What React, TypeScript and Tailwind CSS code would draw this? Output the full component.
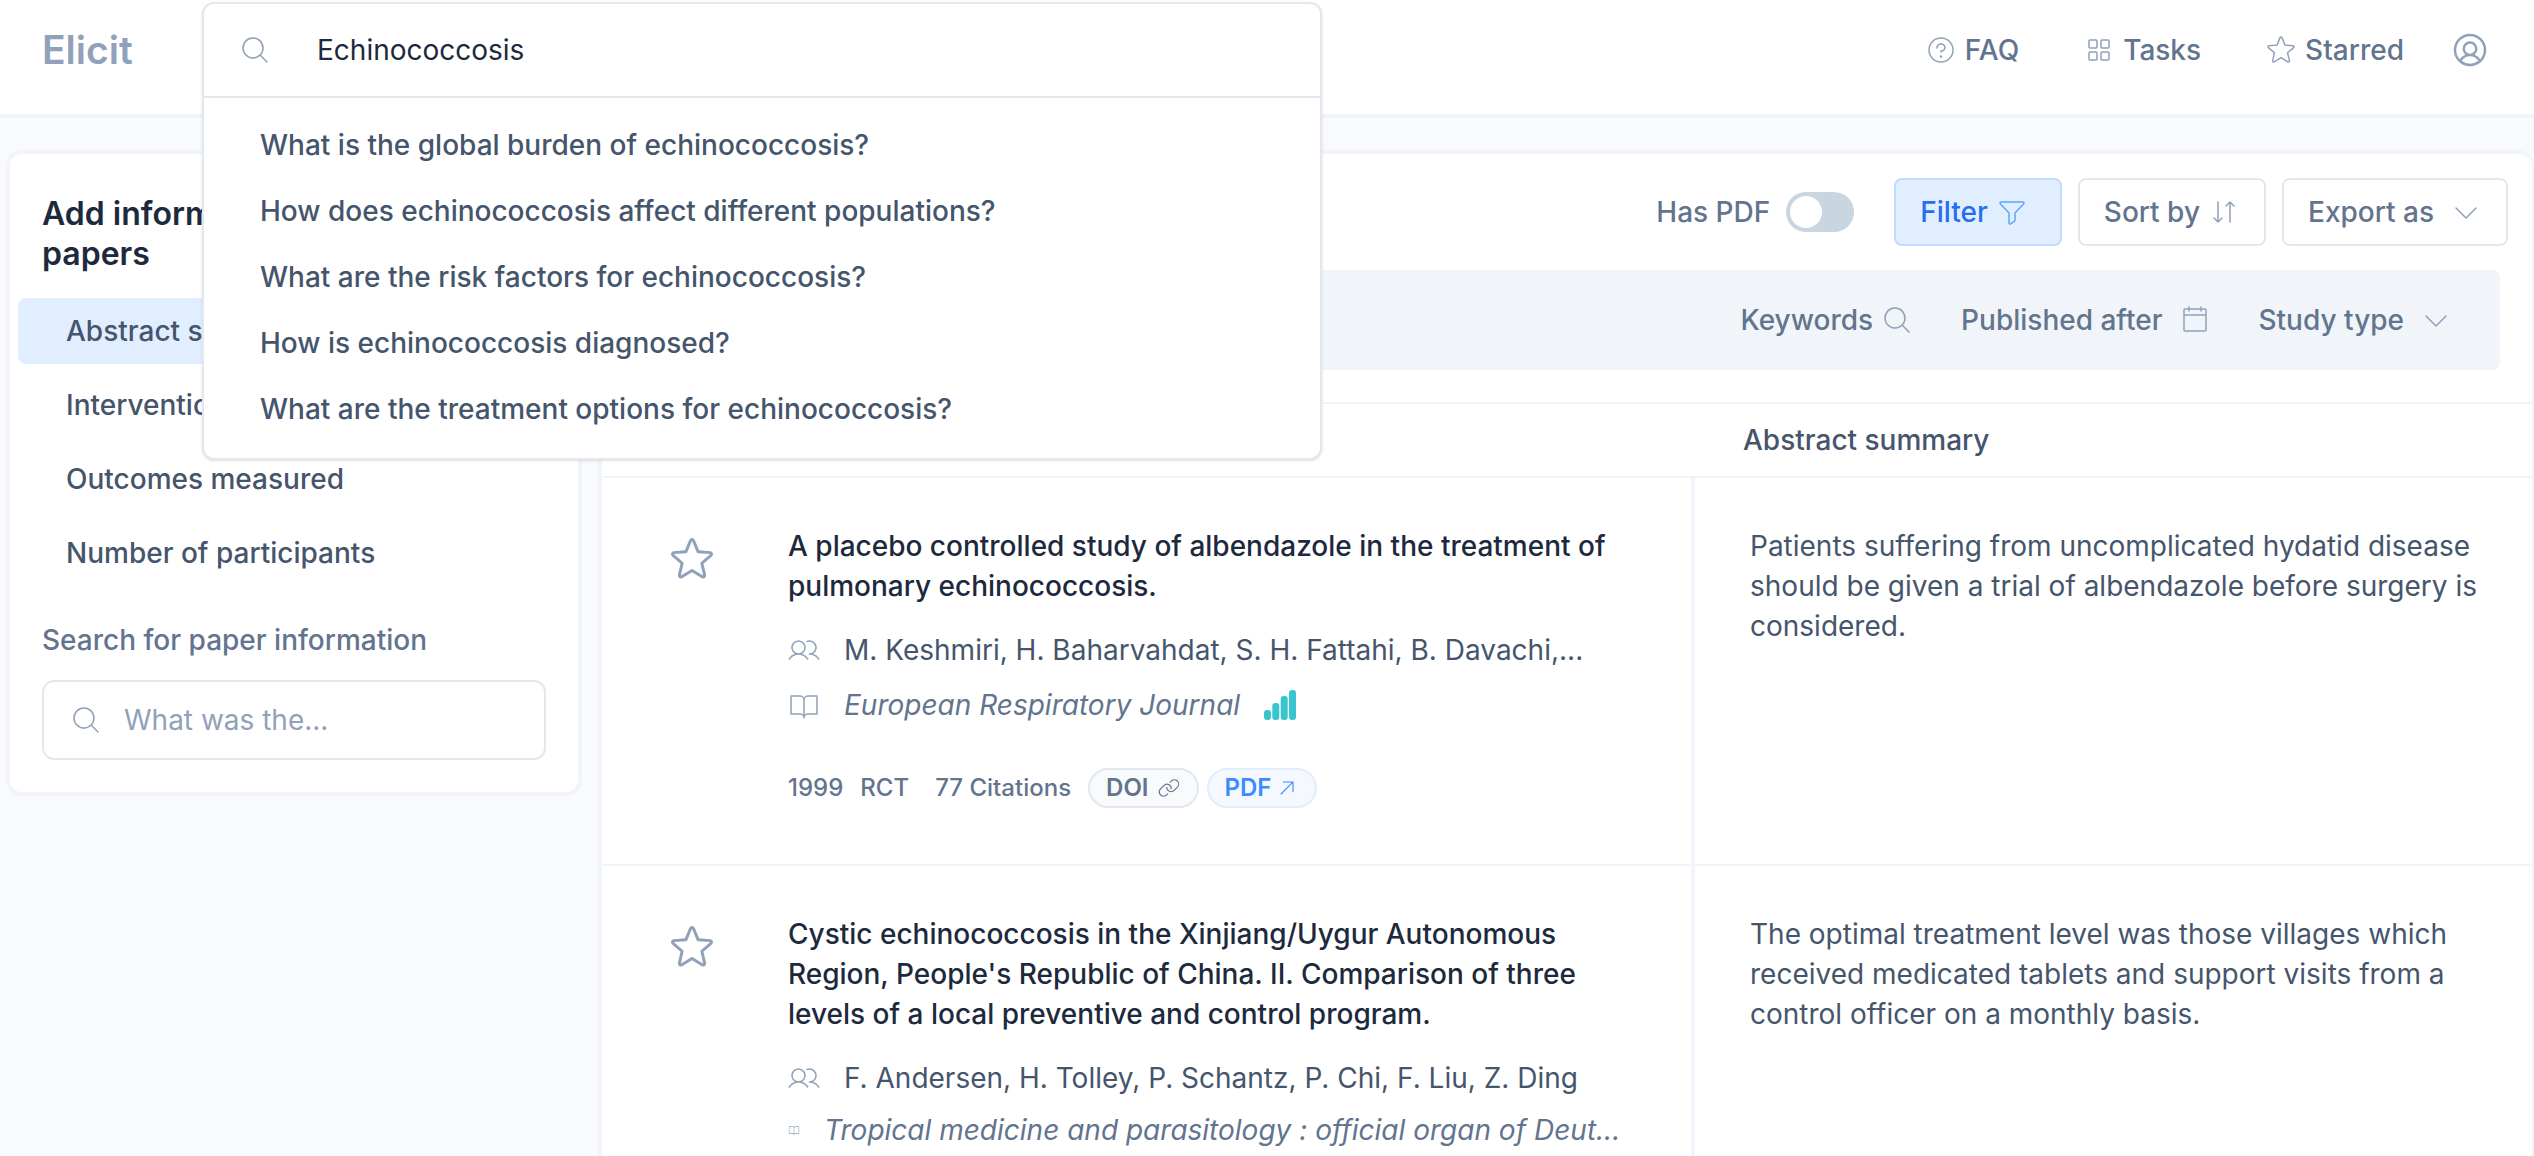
import React, { useState } from "react";
import {
  PiArrowsDownUpLight,
  PiArrowUpRightLight,
  PiBookOpenLight,
  PiCalendarBlankLight,
  PiCaretDownLight,
  PiFunnelLight,
  PiLinkLight,
  PiMagnifyingGlassLight,
  PiQuestionLight,
  PiSquaresFourLight,
  PiStar,
  PiStarLight,
  PiUserCircle,
  PiUsersLight,
} from "react-icons/pi";

interface Paper {
  title: string;
  authors: string;
  journal: string;
  summary: string;
  ranked?: boolean;
  stats?: { year: string; type: string; citations: string };
}

const suggestions = [
  "What is the global burden of echinococcosis?",
  "How does echinococcosis affect different populations?",
  "What are the risk factors for echinococcosis?",
  "How is echinococcosis diagnosed?",
  "What are the treatment options for echinococcosis?",
];

const columns = [
  "Abstract summary",
  "Intervention",
  "Outcomes measured",
  "Number of participants",
];

const papers: Paper[] = [
  {
    title: "A placebo controlled study of albendazole in the treatment of pulmonary echinococcosis.",
    authors: "M. Keshmiri, H. Baharvahdat, S. H. Fattahi, B. Davachi,...",
    journal: "European Respiratory Journal",
    summary:
      "Patients suffering from uncomplicated hydatid disease should be given a trial of albendazole before surgery is considered.",
    ranked: true,
    stats: { year: "1999", type: "RCT", citations: "77 Citations" },
  },
  {
    title:
      "Cystic echinococcosis in the Xinjiang/Uygur Autonomous Region, People's Republic of China. II. Comparison of three levels of a local preventive and control program.",
    authors: "F. Andersen, H. Tolley, P. Schantz, P. Chi, F. Liu, Z. Ding",
    journal: "Tropical medicine and parasitology : official organ of Deut...",
    summary:
      "The optimal treatment level was those villages which received medicated tablets and support visits from a control officer on a monthly basis.",
  },
];

const SearchBox: React.FC = () => {
  const [query, setQuery] = useState("Echinococcosis");

  return (
    <div className="relative h-24 w-[1120px]">
      <div className="absolute inset-x-0 top-0 z-10 rounded-xl border-2 border-slate-200 bg-white shadow-sm">
        <label className="flex h-[94px] items-center gap-[46px] border-b-2 border-slate-200 px-[35px]">
          <PiMagnifyingGlassLight className="size-8 shrink-0 text-slate-400" />
          <input
            type="text"
            aria-label="Search"
            value={query}
            onChange={(e) => setQuery(e.target.value)}
            className="w-full text-slate-800 outline-none"
          />
        </label>
        <ul className="pt-[14px] pb-4">
          {suggestions.map((item) => (
            <li key={item}>
              <button
                className="h-[66px] w-full px-14 text-left font-medium text-slate-600"
                onClick={() => setQuery(item)}
              >
                {item}
              </button>
            </li>
          ))}
        </ul>
      </div>
    </div>
  );
};

const Header: React.FC = () => (
  <header className="flex h-[118px] items-center border-b-4 border-slate-100 bg-white pr-11 pb-[14px] pl-[42px]">
    <a href="#" className="w-40 text-[39px] font-semibold text-slate-400">
      Elicit
    </a>
    <SearchBox />
    <nav className="ml-auto flex items-center gap-16 font-medium text-slate-500">
      <a href="#faq" className="flex items-center gap-2">
        <PiQuestionLight className="size-8 text-slate-400" />
        FAQ
      </a>
      <a href="#tasks" className="flex items-center gap-2">
        <PiSquaresFourLight className="size-8 text-slate-400" />
        Tasks
      </a>
      <a href="#starred" className="flex items-center gap-2">
        <PiStarLight className="size-8 text-slate-400" />
        Starred
      </a>
    </nav>
    <button aria-label="Account" className="ml-[46px]">
      <PiUserCircle className="size-10 text-slate-400" />
    </button>
  </header>
);

const Sidebar: React.FC = () => {
  const [active, setActive] = useState(columns[0]);

  return (
    <aside className="w-[576px] shrink-0 rounded-2xl border-4 border-slate-100 bg-white pt-10 pb-8">
      <h2 className="px-8 text-[32px] font-semibold text-slate-800">
        Add information about
        <br />
        papers
      </h2>
      <ul className="mt-6 space-y-2 px-2">
        {columns.map((name) => (
          <li key={name}>
            <button
              onClick={() => setActive(name)}
              className={`h-[66px] w-full rounded-lg px-12 text-left font-medium text-slate-600 ${
                name === active ? "bg-[#e0eeff]" : ""
              }`}
            >
              {name}
            </button>
          </li>
        ))}
      </ul>
      <div className="mt-[34px] px-8">
        <label htmlFor="info" className="font-medium text-slate-500">
          Search for paper information
        </label>
        <div className="mt-5 flex h-20 items-center gap-[22px] rounded-xl border-2 border-slate-200 px-[26px]">
          <PiMagnifyingGlassLight className="size-8 shrink-0 text-slate-400" />
          <input
            id="info"
            type="text"
            placeholder="What was the..."
            className="w-full outline-none placeholder:text-slate-400"
          />
        </div>
      </div>
    </aside>
  );
};

const Toolbar: React.FC = () => {
  const [hasPdf, setHasPdf] = useState(false);

  return (
    <>
      <div className="flex items-center justify-end gap-4 px-6 pt-6 font-medium text-slate-500">
        <label className="mr-6 flex items-center gap-4">
          Has PDF
          <input
            type="checkbox"
            role="switch"
            checked={hasPdf}
            onChange={(e) => setHasPdf(e.target.checked)}
            className="h-10 w-[68px] appearance-none rounded-full bg-slate-300 p-1 before:block before:size-8 before:rounded-full before:bg-white checked:bg-blue-500 checked:before:ml-auto"
          />
        </label>
        <button className="flex h-[68px] items-center gap-2 rounded-lg border-2 border-[#bfdbfe] bg-[#e0eeff] pr-8 pl-6 text-[#266ef1]">
          Filter
          <PiFunnelLight className="size-8 text-[#60a5fa]" />
        </button>
        <button className="flex h-[68px] items-center gap-2 rounded-lg border-2 border-slate-200 px-6">
          Sort by
          <PiArrowsDownUpLight className="size-8 text-slate-400" />
        </button>
        <button className="flex h-[68px] items-center gap-4 rounded-lg border-2 border-slate-200 px-6">
          Export as
          <PiCaretDownLight className="size-8 text-slate-400" />
        </button>
      </div>
      <div className="mx-8 mt-6 mb-8 flex h-[100px] items-center justify-end gap-12 rounded-lg bg-slate-100 px-12 font-medium text-slate-500">
        <button className="flex items-center gap-2">
          Keywords
          <PiMagnifyingGlassLight className="size-8 text-slate-400" />
        </button>
        <button className="flex items-center gap-4">
          Published after
          <PiCalendarBlankLight className="size-8 text-slate-400" />
        </button>
        <button className="flex items-center gap-4">
          Study type
          <PiCaretDownLight className="size-8 text-slate-400" />
        </button>
      </div>
    </>
  );
};

const RankBars: React.FC = () => (
  <svg viewBox="0 0 32 30" className="my-2 h-[30px] w-8 shrink-0 fill-[#38c5cd]">
    <rect x="0" y="20" width="7" height="10" rx="3" />
    <rect x="8.3" y="13" width="7" height="17" rx="3" />
    <rect x="16.7" y="6" width="7" height="24" rx="3" />
    <rect x="25" y="0" width="7" height="30" rx="3" />
  </svg>
);

const PaperRow: React.FC<{ paper: Paper }> = ({ paper }) => (
  <tr className="border-b-2 border-slate-100 align-top">
    <td className="pt-12 pr-[72px] pb-14 pl-[66px]">
      <div className="flex items-start gap-[72px]">
        <button aria-label="Star paper" className="mt-[9px] shrink-0">
          <PiStar className="size-12 text-slate-400" />
        </button>
        <div className="min-w-0 flex-1">
          <h3 className="font-medium text-slate-800">{paper.title}</h3>
          <div className="mt-6 flex items-center gap-6">
            <PiUsersLight className="size-8 shrink-0 text-slate-400" />
            <span className="truncate">{paper.authors}</span>
          </div>
          <div className="mt-3 flex items-center gap-6 text-slate-500 italic">
            <PiBookOpenLight
              className={`shrink-0 text-slate-400 ${paper.ranked ? "size-8" : "size-3"}`}
            />
            <span className="whitespace-nowrap">{paper.journal}</span>
            {paper.ranked && <RankBars />}
          </div>
          {paper.stats && (
            <div className="mt-10 flex items-center text-2xl font-medium text-slate-500">
              <span className="mr-[17px]">{paper.stats.year}</span>
              <span className="mr-[26px]">{paper.stats.type}</span>
              <span className="mr-[17px]">{paper.stats.citations}</span>
              <a
                href="#doi"
                className="mr-2 flex h-10 items-center gap-2 rounded-full border-2 border-slate-200 bg-slate-50 px-4 font-semibold"
              >
                DOI
                <PiLinkLight className="size-6" />
              </a>
              <a
                href="#pdf"
                className="flex h-10 items-center gap-1 rounded-full border-2 border-[#e0eeff] bg-[#f5f9ff] px-4 font-semibold text-[#3b8bff]"
              >
                PDF
                <PiArrowUpRightLight className="size-6" />
              </a>
            </div>
          )}
        </div>
      </div>
    </td>
    <td className="border-l-4 border-slate-100 pt-12 pr-12 pl-[55px]">{paper.summary}</td>
  </tr>
);

export default function App() {
  return (
    <div className="h-screen overflow-hidden bg-slate-50 font-['Inter',sans-serif] text-[28px] leading-10 text-slate-600">
      <Header />
      <div className="flex items-start gap-4 pt-8 pl-[6px]">
        <Sidebar />
        <main className="min-w-0 flex-1 rounded-t-2xl border-t-4 border-r-2 border-l-4 border-slate-100 bg-white">
          <Toolbar />
          <table className="w-full table-fixed border-collapse">
            <thead>
              <tr className="h-[74px] border-y-2 border-slate-100 text-left">
                <th className="pl-[66px] font-medium">Paper title</th>
                <th className="w-[839px] pl-[50px] font-medium">Abstract summary</th>
              </tr>
            </thead>
            <tbody>
              {papers.map((paper) => (
                <PaperRow key={paper.title} paper={paper} />
              ))}
            </tbody>
          </table>
        </main>
      </div>
    </div>
  );
}
